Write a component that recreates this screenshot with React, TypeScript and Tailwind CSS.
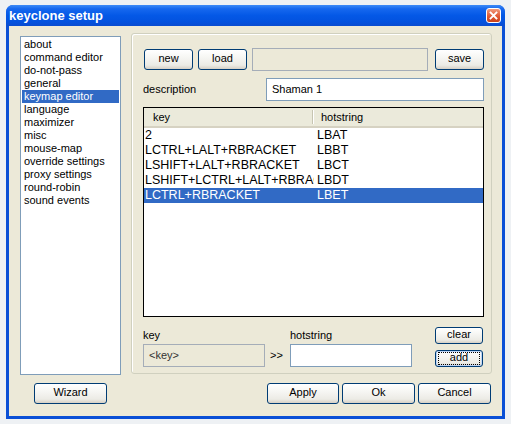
import React from 'react';

const btnBase =
  'flex items-center justify-center rounded-[3px] border border-[#003c74] bg-[linear-gradient(to_bottom,#ffffff_0%,#f6f6f3_40%,#ecebe5_80%,#d6d0c5_100%)] text-[11px] leading-none text-black';

const XpButton: React.FC<{ label: string; className?: string; focused?: boolean }> = ({ label, className = '', focused }) => (
  <div className={`relative ${btnBase} ${className} ${focused ? 'shadow-[inset_0_0_0_1px_#bcd4f6]' : ''}`}>
    {focused && <div className="absolute inset-x-[2px] inset-y-[1px] border border-dotted border-black" />}
    <span className="relative -top-[1px]">{label}</span>
  </div>
);

const sections = [
  'about',
  'command editor',
  'do-not-pass',
  'general',
  'keymap editor',
  'language',
  'maximizer',
  'misc',
  'mouse-map',
  'override settings',
  'proxy settings',
  'round-robin',
  'sound events',
];

const keymap = [
  { key: '2', hot: 'LBAT' },
  { key: 'LCTRL+LALT+RBRACKET', hot: 'LBBT' },
  { key: 'LSHIFT+LALT+RBRACKET', hot: 'LBCT' },
  { key: 'LSHIFT+LCTRL+LALT+RBRACKET', hot: 'LBDT' },
  { key: 'LCTRL+RBRACKET', hot: 'LBET', selected: true },
];

export default function App() {
  return (
    <div className="w-[511px] h-[424px] bg-[#eef1f4] pl-[6px] pt-[5px] font-['Liberation_Sans',Arial,sans-serif]">
      <div className="w-[499px] h-[414px] flex flex-col rounded-t-[7px] bg-[#0a4fd6] overflow-hidden">
        {/* title bar */}
        <div className="h-[21px] flex items-center pl-[3px] pr-[4px] bg-[linear-gradient(to_bottom,#3d8bf7_0%,#1668ef_18%,#0458e6_50%,#0352df_80%,#0a4cd0_100%)]">
          <span className="text-[13px] font-bold text-white leading-none">keyclone setup</span>
          <div className="ml-auto w-[15px] h-[15px] rounded-[3px] border border-white bg-[linear-gradient(to_bottom,#f09a7c,#e25a34_55%,#c8401a)] flex items-center justify-center">
            <svg width="9" height="9" viewBox="0 0 9 9">
              <path d="M1.5 1.5 L7.5 7.5 M7.5 1.5 L1.5 7.5" stroke="white" strokeWidth="1.8" strokeLinecap="square" />
            </svg>
          </div>
        </div>

        {/* client */}
        <div className="mx-[3px] mb-[3px] flex-1 bg-[#ece9d8] flex flex-col pt-[7px]">
          <div className="flex">
            {/* section list */}
            <div className="ml-[11px] mt-[3px] w-[101px] h-[339px] border border-[#7f9db9] bg-white pt-[1px]">
              {sections.map((s) => (
                <div
                  key={s}
                  className={`mx-[1px] h-[13px] pl-[2px] text-[11px] leading-[13px] whitespace-nowrap ${
                    s === 'keymap editor' ? 'bg-[#316ac5] text-white' : 'text-black'
                  }`}
                >
                  {s}
                </div>
              ))}
            </div>

            {/* group frame */}
            <div className="ml-[10px] w-[361px] h-[341px] border border-[#d0d0bf] rounded-[3px] shadow-[inset_1px_1px_0_#fff]">
              <div className="ml-[11px] w-[341px] pt-[14px] flex flex-col">
                <div className="h-[23px] flex items-center">
                  <XpButton label="new" className="ml-[1px] w-[49px] h-[21px]" />
                  <XpButton label="load" className="ml-[5px] w-[49px] h-[21px]" />
                  <div className="ml-[5px] w-[176px] h-[23px] border border-[#a5adb8] bg-[#ece9d8]" />
                  <XpButton label="save" className="ml-auto w-[49px] h-[21px]" />
                </div>

                <div className="mt-[7px] h-[23px] flex items-center">
                  <span className="text-[11px] text-black">description</span>
                  <div className="ml-auto w-[218px] h-[23px] border border-[#7f9db9] bg-white flex items-center pl-[5px] text-[11px] text-black">
                    Shaman 1
                  </div>
                </div>

                {/* key map list */}
                <div className="mt-[6px] h-[210px] border border-black bg-white flex flex-col">
                  <div className="h-[20px] flex items-center bg-[#ebeadb] border-b-2 border-[#d6d2c2] text-[11px] text-black">
                    <div className="w-[170px] h-full flex items-center pl-[9px]">
                      key
                      <div className="ml-auto w-[2px] h-[14px] border-l border-[#c7c5b2] border-r border-r-white" />
                    </div>
                    <div className="pl-[7px]">hotstring</div>
                  </div>
                  {keymap.map((r) => (
                    <div
                      key={r.key}
                      className={`h-[15px] flex text-[12.5px] leading-[15px] ${
                        r.selected ? 'bg-[#316ac5] text-white' : 'text-black'
                      }`}
                    >
                      <div className="w-[170px] shrink-0 pl-[1px] overflow-hidden whitespace-nowrap">{r.key}</div>
                      <div className="pl-[3px]">{r.hot}</div>
                    </div>
                  ))}
                </div>

                {/* editor row */}
                <div className="mt-[10px] flex">
                  <div className="w-[269px] flex flex-col">
                    <div className="h-[17px] flex pt-[2px] text-[11px] leading-[13px] text-black">
                      <span className="w-[147px]">key</span>
                      <span>hotstring</span>
                    </div>
                    <div className="flex items-center">
                      <div className="w-[122px] h-[23px] border border-[#a5adb8] bg-[#ece9d8] flex items-center pl-[5px] text-[11px] text-[#333]">
                        &lt;key&gt;
                      </div>
                      <span className="w-[25px] pl-[5px] text-[11px] text-black">&gt;&gt;</span>
                      <div className="w-[122px] h-[23px] border border-[#7f9db9] bg-white" />
                    </div>
                  </div>
                  <div className="ml-auto mr-[1px] flex flex-col">
                    <XpButton label="clear" className="w-[48px] h-[17px]" />
                    <XpButton label="add" focused className="mt-[6px] w-[48px] h-[17px]" />
                  </div>
                </div>
              </div>
            </div>
          </div>

          {/* bottom buttons */}
          <div className="mt-[8px] flex">
            <XpButton label="Wizard" className="ml-[25px] w-[73px] h-[21px]" />
            <XpButton label="Apply" className="ml-[160px] w-[72px] h-[21px]" />
            <XpButton label="Ok" className="ml-[3px] w-[73px] h-[21px]" />
            <XpButton label="Cancel" className="ml-[3px] w-[73px] h-[21px]" />
          </div>
        </div>
      </div>
    </div>
  );
}
